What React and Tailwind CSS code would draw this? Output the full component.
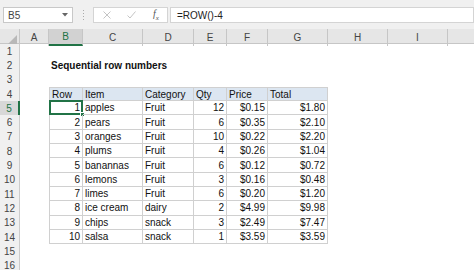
import React from 'react';

const letters = ['A', 'B', 'C', 'D', 'E', 'F', 'G', 'H', 'I', ''];

const rows = [
  [1, 'apples', 'Fruit', 12, '$0.15', '$1.80'],
  [2, 'pears', 'Fruit', 6, '$0.35', '$2.10'],
  [3, 'oranges', 'Fruit', 10, '$0.22', '$2.20'],
  [4, 'plums', 'Fruit', 4, '$0.26', '$1.04'],
  [5, 'banannas', 'Fruit', 6, '$0.12', '$0.72'],
  [6, 'lemons', 'Fruit', 3, '$0.16', '$0.48'],
  [7, 'limes', 'Fruit', 6, '$0.20', '$1.20'],
  [8, 'ice cream', 'dairy', 2, '$4.99', '$9.98'],
  [9, 'chips', 'snack', 3, '$2.49', '$7.47'],
  [10, 'salsa', 'snack', 1, '$3.59', '$3.59'],
];

const header = ['Row', 'Item', 'Category', 'Qty', 'Price', 'Total'];
// right-aligned columns in table (Row, Qty, Price, Total)
const rightCols = [0, 3, 4, 5];

const gridCols = 'grid grid-cols-[20px_29px_34px_60px_51px_33px_41px_60px_60px_60px_60px]';

function FormulaBar() {
  return (
    <div className="h-[29px] bg-[#f0f0f0] flex items-start pt-[7px] pl-[3px] gap-0">
      {/* Name box */}
      <div className="w-[70px] h-[16px] bg-white border border-[#c8c8c8] flex items-center justify-between pl-[4px] pr-[4px] text-[10px] text-[#444]">
        <span>B5</span>
        <svg width="6" height="4" viewBox="0 0 6 4">
          <path d="M0 0 L6 0 L3 3.5 Z" fill="#666" />
        </svg>
      </div>
      {/* grip */}
      <div className="w-[20px] h-[16px] flex flex-col items-center justify-center gap-[2px]">
        <div className="w-[1px] h-[1px] bg-[#aaa]" />
        <div className="w-[1px] h-[1px] bg-[#aaa]" />
        <div className="w-[1px] h-[1px] bg-[#aaa]" />
        <div className="w-[1px] h-[1px] bg-[#aaa]" />
      </div>
      {/* cancel / enter / fx */}
      <div className="w-[75px] h-[16px] bg-white border border-[#d4d4d4] flex items-center pl-[9px]">
        <svg width="8" height="8" viewBox="0 0 8 8" className="mr-[16px]">
          <path d="M0.5 0.5 L7.5 7.5 M7.5 0.5 L0.5 7.5" stroke="#c4c4c4" strokeWidth="1" />
        </svg>
        <svg width="9" height="8" viewBox="0 0 9 8" className="mr-[17px]">
          <path d="M0.5 4.5 L3 7 L8.5 0.5" stroke="#c4c4c4" strokeWidth="1" fill="none" />
        </svg>
        <span className="font-['Liberation_Serif',serif] italic text-[10px] text-[#555] leading-none">
          f<span className="text-[7px] align-sub">x</span>
        </span>
      </div>
      {/* formula input */}
      <div className="ml-[2px] flex-1 h-[16px] bg-white border border-[#d4d4d4] flex items-center pl-[6px] text-[10px] text-[#222]">
        =ROW()-4
      </div>
    </div>
  );
}

function ColumnHeaders() {
  return (
    <div className={`${gridCols} h-[15px] bg-[#e6e6e6] border-b border-[#c6c6c6]`}>
      <div className="border-r border-[#c6c6c6] flex items-end justify-end pr-[2px] pb-[2px]">
        <svg width="9" height="9" viewBox="0 0 9 9">
          <path d="M9 0 L9 9 L0 9 Z" fill="#b8b8b8" />
        </svg>
      </div>
      {letters.map((l, i) => (
        <div
          key={i}
          className={
            l === 'B'
              ? 'bg-[#d2d2d2] border-r border-[#c6c6c6] border-b-2 border-b-[#217346] flex items-center justify-center text-[10px] text-[#217346]'
              : 'border-r border-[#c6c6c6] flex items-center justify-center text-[10px] text-[#444]'
          }
        >
          {l}
        </div>
      ))}
    </div>
  );
}

function tableCell(r, c) {
  // r: sheet row number, c: column index 1..10 (A=1)
  const inTable = r >= 4 && r <= 14 && c >= 2 && c <= 7;
  if (!inTable) {
    if (r === 2 && c === 2) {
      return (
        <div key={c} className="flex items-center pl-[2px] whitespace-nowrap overflow-visible font-bold text-[10px] text-[#111] z-10">
          Sequential row numbers
        </div>
      );
    }
    return <div key={c} />;
  }
  const ti = c - 2;
  const isHeader = r === 4;
  const value = isHeader ? header[ti] : rows[r - 5][ti];
  const right = !isHeader && rightCols.includes(ti);
  let cls = 'relative flex items-center text-[10px] text-[#111] border-r border-b border-[#d0d0d0] whitespace-nowrap';
  cls += right ? ' justify-end pr-[2px]' : ' pl-[2px]';
  if (isHeader) cls += ' bg-[#dce6f1] border-t';
  if (c === 2) cls += ' border-l';
  const active = r === 5 && c === 2;
  return (
    <div key={c} className={cls}>
      {value}
      {active && (
        <>
          <div className="absolute -left-[1px] -top-[1px] -right-[1px] -bottom-[1px] border-2 border-[#217346]" />
          <div className="absolute -right-[3px] -bottom-[3px] w-[5px] h-[5px] bg-[#217346] border border-white" />
        </>
      )}
    </div>
  );
}

function Sheet() {
  const rowNums = Array.from({ length: 16 }, (_, i) => i + 1);
  return (
    <div className={`${gridCols} auto-rows-[14.3px]`}>
      {rowNums.map((r) => (
        <React.Fragment key={r}>
          <div
            className={
              r === 5
                ? 'bg-[#d8d8d8] border-r-2 border-[#217346] flex items-center justify-center text-[10px] text-[#217346]'
                : 'bg-[#f0f0f0] border-r border-[#cccccc] flex items-center justify-center text-[10px] text-[#444]'
            }
          >
            {r}
          </div>
          {letters.map((_, i) => tableCell(r, i + 1))}
        </React.Fragment>
      ))}
    </div>
  );
}

export default function App() {
  return (
    <div className="w-[474px] h-[270px] overflow-hidden bg-white font-['Liberation_Sans',Arial,sans-serif]">
      <FormulaBar />
      <ColumnHeaders />
      <Sheet />
    </div>
  );
}
